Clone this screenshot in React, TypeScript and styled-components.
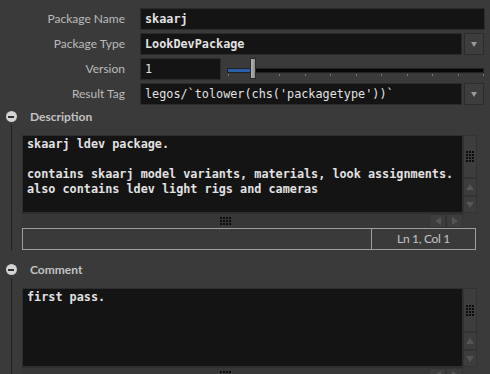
import React from 'react';
import styled, {createGlobalStyle} from 'styled-components';

const colors = {
    bg: '#3a3a3a',
    field: '#141414',
    fieldBorder: '#2b2b2b',
    label: '#bcbcbc',
    text: '#e2e2e2',
    scroll: '#3d3d3d',
    scrollEdge: '#333333',
    arrow: '#555555',
    status: '#9d9d9d',
    blue: '#2a5fa8',
};

const GlobalStyle = createGlobalStyle`
    html, body {
        margin: 0;
        padding: 0;
        background: ${colors.bg};
    }
    body {
        width: 490px;
        height: 374px;
        overflow: hidden;
        font-family: Lato, "Noto Sans", sans-serif;
    }
`;

const Page = styled.div`
    display: flex;
    flex-direction: column;
    width: 490px;
`;

const Params = styled.div`
    display: flex;
    flex-direction: column;
    gap: 3px;
    padding: 8px 5px 0 0;
`;

const Row = styled.div`
    display: grid;
    grid-template-columns: 140px 1fr;
    height: 22px;
`;

const Label = styled.div`
    text-align: right;
    padding-right: 15px;
    line-height: 22px;
    font-size: 12px;
    color: ${colors.label};
`;

const Control = styled.div<{ $gap?: number }>`
    display: flex;
    gap: ${p => p.$gap ?? 2}px;
    min-width: 0;
`;

const Field = styled.div<{ $bold?: boolean; $width?: number }>`
    flex: ${p => p.$width ? `0 0 ${p.$width}px` : '1'};
    box-sizing: border-box;
    background: ${colors.field};
    border: 1px solid ${colors.fieldBorder};
    padding-left: 4px;
    line-height: 20px;
    font-family: "DejaVu Sans Mono", "Liberation Mono", monospace;
    font-size: 11.8px;
    font-weight: ${p => p.$bold ? 'bold' : 'normal'};
    color: ${colors.text};
    white-space: pre;
    overflow: hidden;
`;

const MenuButton = styled.div`
    flex: 0 0 20px;
    box-sizing: border-box;
    margin-right: 1px;
    background: ${colors.scroll};
    border: 1px solid #2c2c2c;
    display: flex;
    align-items: center;
    justify-content: center;
    &::after {
        content: '';
        border-left: 3.5px solid transparent;
        border-right: 3.5px solid transparent;
        border-top: 5px solid #9a9a9a;
    }
`;

const Slider = styled.div`
    flex: 1;
    position: relative;
    margin-left: 4px;
    margin-right: 1px;
`;

const Track = styled.div`
    margin-top: 10px;
    height: 3px;
    background: #070707;
    border: 1px solid #222;
    display: flex;
`;

const Fill = styled.div`
    width: 24px;
    background: ${colors.blue};
`;

const Ticks = styled.div`
    display: flex;
    justify-content: space-between;
    margin-top: 1px;
    padding: 0 0 0 1px;
`;

const Tick = styled.div`
    width: 1px;
    height: 2px;
    background: #7a7a7a;
`;

const Handle = styled.div`
    position: absolute;
    left: 23px;
    top: 0;
    width: 6px;
    height: 21px;
    box-sizing: border-box;
    border: 1px solid #2a2a2a;
    background: linear-gradient(to right, #b4b4b4, #8c8c8c);
`;

const Folder = styled.section`
    display: flex;
    flex-direction: column;
`;

const FolderHeader = styled.div`
    display: flex;
    align-items: center;
    height: 17px;
    margin-top: 3px;
`;

const Toggle = styled.div`
    flex: 0 0 22px;
    display: flex;
    justify-content: center;
    position: relative;
    &::before {
        content: '';
        width: 11px;
        height: 11px;
        border-radius: 50%;
        background: radial-gradient(circle, #d4d4d4 55%, #b0b0b0 100%);
    }
    &::after {
        content: '';
        position: absolute;
        top: 5px;
        left: 8px;
        width: 6px;
        height: 2px;
        background: #333;
    }
`;

const FolderTitle = styled.div`
    margin-left: 8px;
    font-size: 12px;
    font-weight: bold;
    color: #c2c2c2;
`;

const FolderBody = styled.div<{ $bottom: number }>`
    display: flex;
    padding-bottom: ${p => p.$bottom}px;
`;

const Gutter = styled.div`
    flex: 0 0 22px;
    display: flex;
    justify-content: center;
    &::before {
        content: '';
        width: 1px;
        margin-left: 1px;
        background: #1e1e1e;
    }
`;

const Content = styled.div`
    flex: 1;
    padding: 10px 13px 0 0;
`;

const Editor = styled.div`
    display: flex;
    flex-direction: column;
`;

const EditorMain = styled.div`
    display: flex;
`;

const TextArea = styled.div<{ $height: number }>`
    flex: 1;
    height: ${p => p.$height}px;
    box-sizing: border-box;
    background: ${colors.field};
    border: 1px solid #2e2e2e;
    padding: 1px 4px;
    font-family: "DejaVu Sans Mono", "Liberation Mono", monospace;
    font-size: 11.8px;
    font-weight: bold;
    line-height: 15px;
    color: ${colors.text};
    white-space: pre;
    overflow: hidden;
`;

const VScroll = styled.div`
    flex: 0 0 14px;
    display: flex;
    flex-direction: column;
`;

const ScrollPart = styled.div<{ $size?: number }>`
    flex: ${p => p.$size ? `0 0 ${p.$size}px` : '1'};
    box-sizing: border-box;
    background: ${colors.scroll};
    border: 1px solid ${colors.scrollEdge};
    display: flex;
    align-items: center;
    justify-content: center;
`;

const HBar = styled.div`
    display: flex;
    height: 15px;
    margin-right: 14px;
    background: #373737;
    border-top: 1px solid #2f2f2f;
    box-sizing: border-box;
`;

const HGrip = styled.div`
    flex: 1;
    display: flex;
    align-items: center;
    justify-content: center;
`;

const HArrow = styled.div`
    flex: 0 0 17px;
    box-sizing: border-box;
    background: ${colors.scroll};
    border: 1px solid ${colors.scrollEdge};
    display: flex;
    align-items: center;
    justify-content: center;
`;

const Arrow = styled.div<{ $dir: 'up' | 'down' | 'left' | 'right' }>`
    width: 0;
    height: 0;
    ${p => p.$dir === 'up' && `border-left: 4px solid transparent; border-right: 4px solid transparent; border-bottom: 6px solid ${colors.arrow};`}
    ${p => p.$dir === 'down' && `border-left: 4px solid transparent; border-right: 4px solid transparent; border-top: 6px solid ${colors.arrow};`}
    ${p => p.$dir === 'left' && `border-top: 4px solid transparent; border-bottom: 4px solid transparent; border-right: 6px solid ${colors.arrow};`}
    ${p => p.$dir === 'right' && `border-top: 4px solid transparent; border-bottom: 4px solid transparent; border-left: 6px solid ${colors.arrow};`}
`;

const StatusBar = styled.div`
    display: flex;
    height: 22px;
    box-sizing: border-box;
    border: 1px solid ${colors.status};
    margin-right: 1px;
`;

const StatusSpace = styled.div`
    flex: 1;
`;

const StatusCell = styled.div`
    flex: 0 0 103px;
    border-left: 1px solid ${colors.status};
    text-align: center;
    line-height: 20px;
    font-size: 12px;
    letter-spacing: -0.3px;
    color: #c4c4c4;
`;

const Dots = ({cols, rows}: { cols: number; rows: number }) => (
    <svg width={cols * 3 - 1} height={rows * 3 - 1}>
        {Array.from({length: cols * rows}, (_, i) => (
            <rect key={i} x={(i % cols) * 3} y={Math.floor(i / cols) * 3} width={2} height={2} fill="#0c0c0c"/>
        ))}
    </svg>
);

const TextEditor = ({text, height, status}: { text: string; height: number; status?: boolean }) => (
    <Editor>
        <EditorMain>
            <TextArea $height={height}>{text}</TextArea>
            <VScroll>
                <ScrollPart><Dots cols={3} rows={4}/></ScrollPart>
                <ScrollPart $size={18}><Arrow $dir="up"/></ScrollPart>
                <ScrollPart $size={17}><Arrow $dir="down"/></ScrollPart>
            </VScroll>
        </EditorMain>
        <HBar>
            <HGrip><Dots cols={4} rows={3}/></HGrip>
            <HArrow><Arrow $dir="left"/></HArrow>
            <HArrow><Arrow $dir="right"/></HArrow>
        </HBar>
        {status && (
            <StatusBar>
                <StatusSpace/>
                <StatusCell>Ln 1, Col 1</StatusCell>
            </StatusBar>
        )}
    </Editor>
);

const ticks = Array.from({length: 11});

export default function App() {
    return (
        <Page>
            <GlobalStyle/>
            <Params>
                <Row>
                    <Label>Package Name</Label>
                    <Control><Field $bold>skaarj</Field></Control>
                </Row>
                <Row>
                    <Label>Package Type</Label>
                    <Control><Field $bold>LookDevPackage</Field><MenuButton/></Control>
                </Row>
                <Row>
                    <Label>Version</Label>
                    <Control $gap={2}>
                        <Field $width={81}>1</Field>
                        <Slider>
                            <Track><Fill/></Track>
                            <Ticks>{ticks.map((_, i) => <Tick key={i}/>)}</Ticks>
                            <Handle/>
                        </Slider>
                    </Control>
                </Row>
                <Row>
                    <Label>Result Tag</Label>
                    <Control><Field>legos/`tolower(chs('packagetype'))`</Field><MenuButton/></Control>
                </Row>
            </Params>
            <Folder>
                <FolderHeader>
                    <Toggle/>
                    <FolderTitle>Description</FolderTitle>
                </FolderHeader>
                <FolderBody $bottom={8}>
                    <Gutter/>
                    <Content>
                        <TextEditor
                            height={78}
                            status
                            text={'skaarj ldev package.\n\ncontains skaarj model variants, materials, look assignments.\nalso contains ldev light rigs and cameras'}
                        />
                    </Content>
                </FolderBody>
            </Folder>
            <Folder>
                <FolderHeader>
                    <Toggle/>
                    <FolderTitle>Comment</FolderTitle>
                </FolderHeader>
                <FolderBody $bottom={0}>
                    <Gutter/>
                    <Content>
                        <TextEditor height={79} text="first pass."/>
                    </Content>
                </FolderBody>
            </Folder>
        </Page>
    );
}
